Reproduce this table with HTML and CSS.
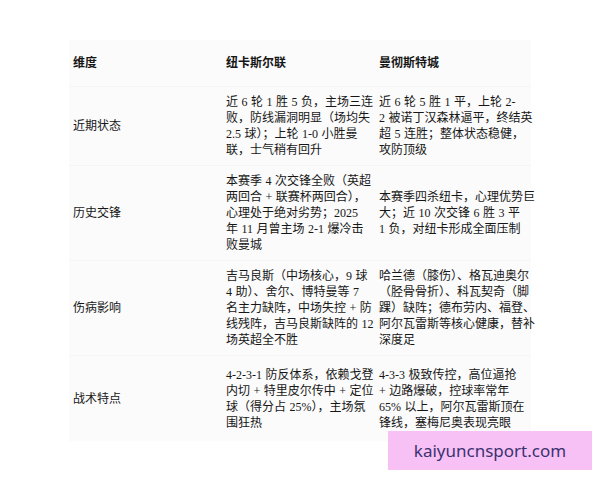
FILE: index.html
```html
<!DOCTYPE html>
<html lang="zh-CN">
<head>
<meta charset="utf-8">
<title>纽卡斯尔联 vs 曼彻斯特城</title>
<link rel="stylesheet" href="styles.css">
</head>
<body>
<div class="page">
  <table class="cmp">
    <colgroup>
      <col class="c1"><col class="c2"><col class="c3">
    </colgroup>
    <thead>
      <tr><th>维度</th><th>纽卡斯尔联</th><th>曼彻斯特城</th></tr>
    </thead>
    <tbody>
      <tr>
        <td>近期状态</td>
        <td>近 6 轮 1 胜 5 负，主场三连<br>败，防线漏洞明显（场均失<br>2.5 球）；上轮 1-0 小胜曼<br>联，士气稍有回升</td>
        <td>近 6 轮 5 胜 1 平，上轮 2-<br>2 被诺丁汉森林逼平，终结英<br>超 5 连胜；整体状态稳健，<br>攻防顶级</td>
      </tr>
      <tr>
        <td>历史交锋</td>
        <td>本赛季 4 次交锋全败（英超<br>两回合 + 联赛杯两回合），<br>心理处于绝对劣势；2025<br>年 11 月曾主场 2-1 爆冷击<br>败曼城</td>
        <td>本赛季四杀纽卡，心理优势巨<br>大；近 10 次交锋 6 胜 3 平<br>1 负，对纽卡形成全面压制</td>
      </tr>
      <tr>
        <td>伤病影响</td>
        <td>吉马良斯（中场核心，9 球<br>4 助）、舍尔、博特曼等 7<br>名主力缺阵，中场失控 + 防<br>线残阵，吉马良斯缺阵的 12<br>场英超全不胜</td>
        <td>哈兰德（膝伤）、格瓦迪奥尔<br>（胫骨骨折）、科瓦契奇（脚<br>踝）缺阵；德布劳内、福登、<br>阿尔瓦雷斯等核心健康，替补<br>深度足</td>
      </tr>
      <tr>
        <td>战术特点</td>
        <td>4-2-3-1 防反体系，依赖戈登<br>内切 + 特里皮尔传中 + 定位<br>球（得分占 25%），主场氛<br>围狂热</td>
        <td>4-3-3 极致传控，高位逼抢<br>+ 边路爆破，控球率常年<br>65% 以上，阿尔瓦雷斯顶在<br>锋线，塞梅尼奥表现亮眼</td>
      </tr>
    </tbody>
  </table>
  <div class="watermark">kaiyuncnsport.com</div>
</div>
</body>
</html>
```
FILE: styles.css
```css
html, body {
  margin: 0;
  padding: 0;
  background: #ffffff;
}

.page {
  position: relative;
  width: 600px;
  height: 480px;
  overflow: hidden;
  padding-top: 40px;
  box-sizing: border-box;
}

.cmp {
  margin-left: 69px;
  width: 462px;
  table-layout: fixed;
  border-collapse: collapse;
  background: #fbfbfb;
  color: #161616;
  font-family: "Liberation Serif", "Noto Sans CJK SC", serif;
  font-size: 12px;
  line-height: 16px;
  word-spacing: 0.5px;
}

.c1 { width: 153px; }
.c2 { width: 153px; }
.c3 { width: 156px; }

.cmp th,
.cmp td {
  padding: 7px 0 7px 4px;
  text-align: left;
  vertical-align: middle;
  white-space: nowrap;
  border-bottom: 1px solid #f5f5f5;
}

.cmp th {
  height: 32px;
  font-weight: bold;
}

.cmp tbody tr:last-child td {
  border-bottom: none;
  padding-top: 11px;
  padding-bottom: 10px;
}

.watermark {
  position: absolute;
  left: 388px;
  top: 431px;
  width: 204px;
  height: 39px;
  background: #f8c1f6;
  color: #3b3270;
  font-family: "Noto Sans", sans-serif;
  font-size: 17px;
  display: flex;
  align-items: center;
  justify-content: center;
}
```
